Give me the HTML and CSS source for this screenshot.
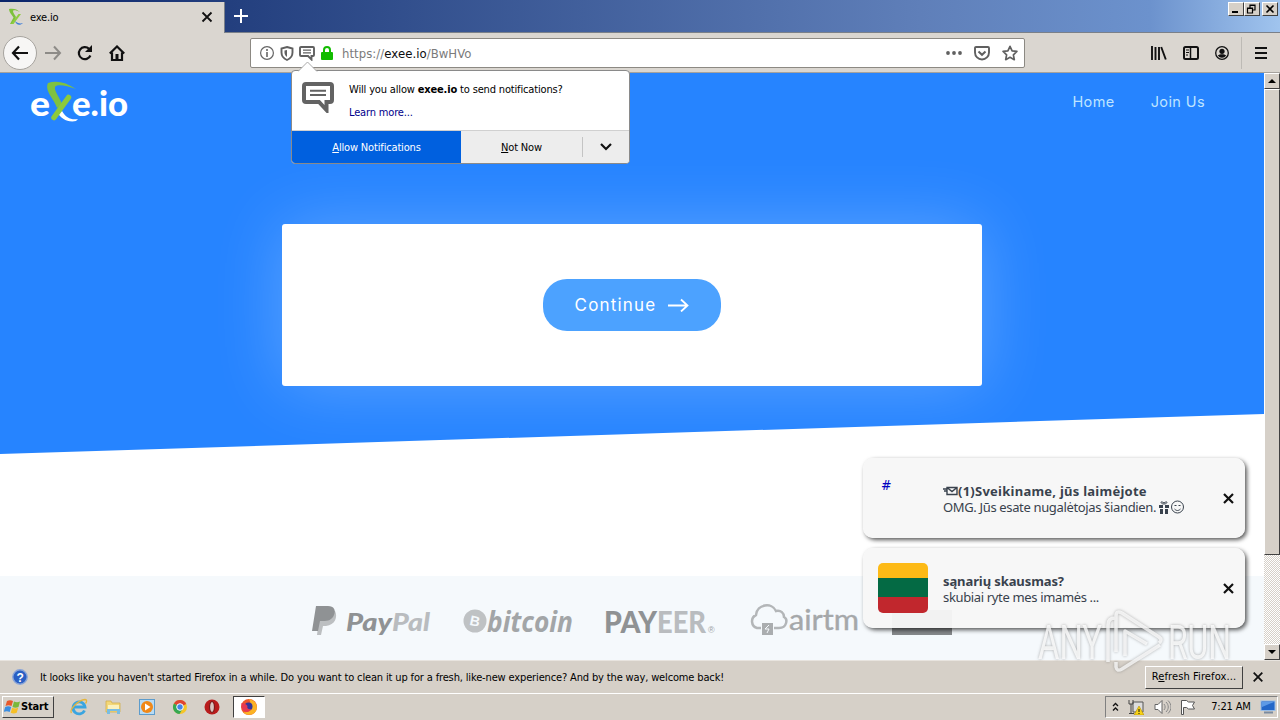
FILE: index.html
```html
<!DOCTYPE html>
<html lang="en">
<head>
<meta charset="UTF-8">
<meta name="viewport" content="width=device-width, initial-scale=1">
<title>exe.io</title>
<link rel="stylesheet" href="styles.css">
</head>
<body>

<div class="tabstrip">
  <div class="tab">
    <svg class="favicon" width="16" height="18" viewBox="0 0 16 18">
      <path d="M1 1c4-1 8 0 11 3-4-2-7-2-7-1 0 2 2 4 3 6L5 16H2L5.500 9.500C3 6 1 4 1 1z" fill="#7dc13c"/>
      <path d="M13 6 5.500 16H3L10.500 6z" fill="#8fcc3f"/>
      <path d="M7 13c2 2 5 3 8 2-3 3-7 2-8-2z" fill="#3f7fd8"/>
    </svg>
    <span class="tab-title">exe.io</span>
    <svg width="12" height="12" viewBox="0 0 12 12"><path d="M1.500 1.500l9 9M10.500 1.500l-9 9" stroke="#111" stroke-width="1.800"/></svg>
  </div>
  <svg class="new-tab" width="14" height="14" viewBox="0 0 14 14"><path d="M7 0v14M0 7h14" stroke="#fff" stroke-width="2"/></svg>
  <div class="win-buttons">
    <span class="win-btn"><svg width="15" height="12"><path d="M3 9h6" stroke="#000" stroke-width="2"/></svg></span>
    <span class="win-btn"><svg width="15" height="12"><path d="M5 5V2h5v5H8M5 2.500h5M2.500 5h5v5h-5zM2 5.500h6" stroke="#000" stroke-width="1.200" fill="none"/></svg></span>
    <span class="win-btn last"><svg width="15" height="12"><path d="M3.500 2.500l7 7M10.500 2.500l-7 7" stroke="#000" stroke-width="1.600"/></svg></span>
  </div>
</div>

<div class="toolbar">
  <div class="nav-buttons">
    <span class="back"><svg width="18" height="16" viewBox="0 0 18 16"><path d="M8 1.500L2 8l6 6.500M2 8h15" stroke="#111" stroke-width="2.200" fill="none"/></svg></span>
    <svg class="forward" width="18" height="16" viewBox="0 0 18 16"><path d="M10 1.500L16 8l-6 6.500M16 8H1" stroke="#8d8b87" stroke-width="2" fill="none"/></svg>
    <svg width="16" height="16" viewBox="0 0 16 16"><path d="M13.400 10.500A6 6 0 1 1 12 3.800" stroke="#111" stroke-width="2.200" fill="none"/><path d="M15 0v7H8z" fill="#111"/></svg>
    <svg width="16" height="16" viewBox="0 0 16 16"><path d="M.8 8.500L8 1.500l7.200 7M3 7.500V15h10V7.500" stroke="#111" stroke-width="2.200" fill="none"/><path d="M6.500 9h3v6h-3z" fill="#111"/></svg>
  </div>
  <div class="urlbar">
    <svg width="14" height="14" viewBox="0 0 14 14"><circle cx="7" cy="7" r="6.400" fill="none" stroke="#666" stroke-width="1.200"/><path d="M7 3v2M7 6v5" stroke="#666" stroke-width="1.600"/></svg>
    <svg width="14" height="15" viewBox="0 0 14 15"><path d="M7 1l5.500 1.500v4C12.500 10 10.500 12.500 7 14 3.500 12.500 1.500 10 1.500 6.500v-4z" fill="none" stroke="#606060" stroke-width="1.900"/><path d="M7 4v7C5.300 9.700 4.500 8.500 4.500 6.500v-2z" fill="#606060"/></svg>
    <svg class="bubble" width="16" height="15" viewBox="0 0 16 15"><path d="M2 1h12a1 1 0 0 1 1 1v7a1 1 0 0 1-1 1h-1.500v3.500L9 10H2a1 1 0 0 1-1-1V2a1 1 0 0 1 1-1z" fill="none" stroke="#606060" stroke-width="1.900"/><path d="M4 4.200h8M4 6.800h8" stroke="#606060" stroke-width="1.200"/></svg>
    <svg class="lock" width="12" height="14" viewBox="0 0 12 14"><path d="M3 7V4a3 3 0 0 1 6 0v3" fill="none" stroke="#12bc00" stroke-width="2"/><rect y="6" width="12" height="8" rx="1" fill="#12bc00"/></svg>
    <span class="url">https://<b>exee.io</b>/BwHVo</span>
    <svg class="dots" width="16" height="4" viewBox="0 0 16 4"><circle cx="2" cy="2" r="1.900"/><circle cx="8" cy="2" r="1.900"/><circle cx="14" cy="2" r="1.900"/></svg>
    <svg width="16" height="15" viewBox="0 0 16 15"><path d="M2 1h12a1 1 0 0 1 1 1v4.500a7 7 0 0 1-14 0V2a1 1 0 0 1 1-1z" fill="none" stroke="#606060" stroke-width="1.900"/><path d="M4.500 5.500L8 8.800l3.500-3.300" fill="none" stroke="#606060" stroke-width="2"/></svg>
    <svg class="star" width="16" height="16" viewBox="0 0 16 16"><path d="M8 1.300l2.100 4.500 4.800.6-3.500 3.400.9 4.900L8 12.300l-4.300 2.400.9-4.900L1.100 6.400l4.800-.6z" fill="none" stroke="#606060" stroke-width="1.700" stroke-linejoin="round"/></svg>
  </div>
  <div class="tools">
    <svg width="16" height="14" viewBox="0 0 16 14"><path d="M1 0v14M4.500 1v13M8 1v13M10.200 1l4.600 12.500" stroke="#111" stroke-width="1.900"/></svg>
    <svg width="16" height="14" viewBox="0 0 16 14"><rect x="1" y="1" width="14" height="12" rx="1.500" fill="none" stroke="#111" stroke-width="2"/><path d="M7.500 1v12" stroke="#111" stroke-width="1.500"/><path d="M3 4h3M3 6.500h3M3 9h2" stroke="#111"/></svg>
    <svg width="14" height="14" viewBox="0 0 14 14"><circle cx="7" cy="7" r="6.300" fill="none" stroke="#111" stroke-width="1.300"/><circle cx="7" cy="5.300" r="2.600" fill="#111"/><path d="M2.800 9.500c2-1.600 6.400-1.600 8.400 0a5 5 0 0 1-8.400 0z" fill="#111"/></svg>
    <span class="sep"></span>
    <svg width="12" height="12" viewBox="0 0 12 12"><path d="M0 1h12M0 6h12M0 11h12" stroke="#111" stroke-width="2"/></svg>
  </div>
</div>

<div class="content">
  <div class="page">
    <div class="hero">
      <div class="site-nav">
        <svg class="logo" width="100" height="44" viewBox="0 0 100 44">
          <path d="M32 31c4 7 9 9 16 8l-2 2c-8 2-16-3-18-8z" fill="#fff"/>
          <g font-family="Lato, sans-serif" font-weight="900" font-size="34" fill="#fff">
            <text x="0" y="36" textLength="20" lengthAdjust="spacingAndGlyphs">e</text>
            <text x="42" y="36" textLength="56" lengthAdjust="spacingAndGlyphs">e.io</text>
          </g>
          <path d="M18 3c8-3 18-1 28 6-10-4-20-5-21-2-1 4 5 11 7 17l-5 4C25 20 14 11 18 3z" fill="#7fc241"/>
          <path d="M38.500 17.500L24 37.500" stroke="#8dca3c" stroke-width="5.500" stroke-linecap="round"/>
        </svg>
        <nav class="links"><a>Home</a><a class="join">Join Us</a></nav>
      </div>
      <div class="card">
        <div class="continue"><span>Continue</span>
          <svg width="21" height="14" viewBox="0 0 21 14"><path d="M0 7.500h19M13 1.500l6.500 6-6.500 6" stroke="#fff" stroke-width="1.800" fill="none"/></svg>
        </div>
      </div>
    </div>
    <div class="payments">
      <svg class="brands" width="660" height="46" viewBox="0 0 660 46">
        <!-- paypal -->
        <path d="M8 11h15c3 6 0 14-9 15h-3l-2 9H5z" fill="#bcbfc1"/>
        <path d="M4 6h12c6 0 8 4 6 9-2 5-6 6-11 6H8l-2 10H0z" fill="#8f9294"/>
        <g font-family="Lato, sans-serif" font-weight="900" font-style="italic" font-size="24">
          <text x="34" y="31" textLength="46" lengthAdjust="spacingAndGlyphs" fill="#8f9294">Pay</text>
          <text x="80" y="31" textLength="38" lengthAdjust="spacingAndGlyphs" fill="#b9bcbf">Pal</text>
        </g>
        <!-- bitcoin -->
        <circle cx="163" cy="21" r="11.500" fill="#bfc2c4"/>
        <text x="158" y="26" font-family="Liberation Sans" font-weight="bold" font-size="14" fill="#f5f9fc" transform="rotate(12 163 21)">B</text>
        <text x="175" y="32" font-family="Open Sans, sans-serif" font-weight="bold" font-style="italic" font-size="28" textLength="86" lengthAdjust="spacingAndGlyphs" fill="#a2a5a7">bitcoin</text>
        <!-- payeer -->
        <g font-family="Lato, sans-serif" font-weight="900" font-size="30">
          <text x="292" y="33" textLength="53" lengthAdjust="spacingAndGlyphs" fill="#8f9294">PAY</text>
          <text x="345" y="33" textLength="49" lengthAdjust="spacingAndGlyphs" fill="#b9bcbf">EER</text>
        </g>
        <text x="396" y="33" font-family="Liberation Sans" font-size="9" fill="#a0a3a5">®</text>
        <!-- airtm -->
        <path d="M449 28h-4a7 7 0 0 1-1-13c1-11 16-13 20-4 5-1 8 2 8 6 4 2 3 11-5 11h-5" fill="none" stroke="#b3b6b8" stroke-width="2.500"/>
        <rect x="450" y="23" width="11" height="12" fill="#aaadaf"/>
        <path d="M457 25l-4 4h4l-2 4" stroke="#f5f9fc" fill="none"/>
        <text x="477" y="30" font-family="Lato, sans-serif" font-size="29" textLength="70" lengthAdjust="spacingAndGlyphs" fill="#a5a8aa" stroke="#a5a8aa" stroke-width=".4">airtm</text>
        <rect x="580" y="10" width="60" height="25" fill="#86898b"/>
      </svg>
    </div>
  </div>
  <div class="scrollbar">
    <span class="sb-btn"><svg width="8" height="4"><path d="M0 4l4-4 4 4z"/></svg></span>
    <span class="sb-thumb"></span>
    <span class="sb-track"></span>
    <span class="sb-btn"><svg width="8" height="4"><path d="M0 0l4 4 4-4z"/></svg></span>
  </div>
</div>

<div class="infobar">
  <svg width="16" height="16" viewBox="0 0 16 16"><circle cx="8" cy="8" r="7.200" fill="#2a5fc4" stroke="#8aa5d8" stroke-width="1.400"/><text x="4.600" y="12.500" font-family="Liberation Sans" font-weight="bold" font-size="12" fill="#fff">?</text></svg>
  <span class="info-text">It looks like you haven't started Firefox in a while. Do you want to clean it up for a fresh, like-new experience? And by the way, welcome back!</span>
  <span class="refresh">R<u>e</u>fresh Firefox...</span>
  <svg width="10" height="10" viewBox="0 0 10 10"><path d="M.7.7l8.600 8.600M9.300.7L.7 9.300" stroke="#111" stroke-width="1.800"/></svg>
</div>

<div class="taskbar">
  <div class="start">
    <svg width="17" height="16" viewBox="0 0 17 16">
      <path d="M3 2c2-1 4-1 6 0L7.500 7c-2-1-4-1-6 0z" fill="#e8582a"/>
      <path d="M10 2.500c2 1 4 1 6 0L14.500 8c-2 1-4 1-6 0z" fill="#7ab83a"/>
      <path d="M1.200 8c2-1 4-1 6 0l-1.500 5c-2-1-4-1-6 0z" fill="#3b8de0"/>
      <path d="M8.200 8.800c2 1 4 1 6 0l-1.500 5c-2 1-4 1-6 0z" fill="#f6bf26"/>
    </svg>
    <span>Start</span>
  </div>
  <div class="apps">
    <svg width="18" height="18" viewBox="0 0 18 18"><path d="M14.500 12.500A6 6 0 1 1 15 9H4" fill="none" stroke="#3aa5e0" stroke-width="2.800"/><path d="M1.500 15C-1 12 8 2 15 1.500c2.500 0 1.500 3 .5 4" fill="none" stroke="#e5b53c" stroke-width="1.300"/></svg>
    <svg width="18" height="18" viewBox="0 0 18 18"><path d="M2 3h5l1 2h8v9H2z" fill="#f3d778" stroke="#d3ae4b" stroke-width=".8"/><path d="M4 7h11v4H4z" fill="#fbf1bd"/><path d="M3 16v-5h13v5h-3v-3H6v3z" fill="#79bde2"/></svg>
    <svg width="18" height="18" viewBox="0 0 18 18"><rect x="1.500" y="1.500" width="15" height="15" fill="#b8dbf4" stroke="#5d9ccc"/><circle cx="9" cy="9" r="6" fill="#f08818"/><path d="M7 5.500l5.500 3.500L7 12.500z" fill="#fff"/></svg>
    <svg width="16" height="16" viewBox="0 0 16 16"><circle cx="8" cy="8" r="7" fill="#f5c528"/><path d="M8 8L1.900 4.500A7 7 0 0 1 14.200 5z" fill="#df4432"/><path d="M8 8L1.900 4.500A7 7 0 0 0 7.500 15l3-5z" fill="#36a852"/><circle cx="8" cy="8" r="3.300" fill="#4385e8" stroke="#fff"/></svg>
    <svg width="16" height="16" viewBox="0 0 16 16"><circle cx="8" cy="8" r="7.500" fill="#b81c1c"/><ellipse cx="8" cy="8" rx="2.400" ry="5.500" fill="#d9c5c0" stroke="#701010"/></svg>
    <span class="app-active"><svg width="18" height="18" viewBox="0 0 18 18"><circle cx="9" cy="9" r="8" fill="#f0562a"/><path d="M9 1c6 1 9 6 7.500 11A8 8 0 0 1 3 14c8 2 10-5 6-13z" fill="#fbb324"/><circle cx="8.500" cy="8.500" r="4" fill="#35359a"/><path d="M1.500 5c2 0 5 1 6 3-1 2 1 4 4 3-3 5-9 3-10-2z" fill="#e63852"/></svg></span>
  </div>
  <div class="tray">
    <svg width="7" height="10" viewBox="0 0 7 10"><path d="M1 4l2.500-2.500L6 4M1 8.500L3.500 6 6 8.500" fill="none" stroke="#111" stroke-width="1.300"/></svg>
    <svg width="16" height="16" viewBox="0 0 16 16"><path d="M5 3h10v10H5z" fill="#ddd" stroke="#555"/><path d="M1 1v4h4V1M3 5v10M1 14.500h5" stroke="#444" fill="none"/><path d="M11 7l5 9H6z" fill="#f8d316" stroke="#b48b00" stroke-width=".6"/><path d="M11 10v3M11 14v1" stroke="#111"/></svg>
    <svg width="17" height="16" viewBox="0 0 17 16"><path d="M1 5.500h3L8 1.500v13l-4-4H1z" fill="#fff" stroke="#666"/><path d="M10 5c1.500 2 1.500 4 0 6M12 3c3 3 3 7 0 10M14 1.500c4 4 4 9 0 13" fill="none" stroke="#888"/></svg>
    <svg width="16" height="16" viewBox="0 0 16 16"><path d="M1.500 15.500V1.500h5l2 1.500h6l-2 3.500 2 3.500h-6l-2-1.500h-3v7z" fill="#fff" stroke="#555"/></svg>
    <span class="clock">7:21 AM</span>
    <svg width="16" height="14" viewBox="0 0 16 14"><rect x="1" y="1" width="14" height="9.500" fill="#2467c8" stroke="#98bde8"/><path d="M2 2h12L2 7z" fill="#5d9ae6"/><path d="M4 12.500h9" stroke="#7a8ba0" stroke-width="2"/></svg>
  </div>
</div>

<div class="doorhanger">
  <svg class="arrow" width="20" height="11" viewBox="0 0 20 11"><path d="M0 10.500L9.500 1 19 10.500" fill="#fff" stroke="#aaa"/><path d="M1 10h17v1H1z" fill="#fff"/></svg>
  <div class="dh-body">
    <svg width="32" height="31" viewBox="0 0 32 31"><path d="M4 2h24a2 2 0 0 1 2 2v14a2 2 0 0 1-2 2h-3.500v8L17 20H4a2 2 0 0 1-2-2V4a2 2 0 0 1 2-2z" fill="none" stroke="#636363" stroke-width="4"/><path d="M8 8.700h16M8 13h16" stroke="#636363" stroke-width="2"/></svg>
    <div class="dh-text">
      <div class="question">Will you allow <b>exee.io</b> to send notifications?</div>
      <div class="learn">Learn more...</div>
    </div>
  </div>
  <div class="dh-actions">
    <span class="allow"><span><u>A</u>llow Notifications</span></span>
    <span class="notnow"><span><u>N</u>ot Now</span></span>
    <span class="more"><svg width="12" height="8" viewBox="0 0 12 8"><path d="M1 1l5 5 5-5" stroke="#111" stroke-width="2.200" fill="none"/></svg></span>
  </div>
</div>

<div class="toasts">
  <div class="toast">
    <span class="thumb hash">#</span>
    <div class="toast-text">
      <div class="toast-title"><svg width="15" height="10" viewBox="0 0 15 10"><path d="M4 1.500h10v7H4zM4 1.500l5 4 5-4M0 3h4M1 5h3" fill="none" stroke="#39424d" stroke-width="1.400"/></svg><span class="t1">(1)Sveikiname, jūs laimėjote</span></div>
      <div class="toast-msg"><span class="m1">OMG. Jūs esate nugalėtojas šiandien.</span><svg width="28" height="14" viewBox="0 0 28 14"><path d="M3 5h4v3H3zM9 5h4v3H9zM4 9h3v5H4zM9 9h3v5H9z" fill="#39424d"/><path d="M8 4C4 4 4 0 8 3c4-3 4 1 0 1z" fill="none" stroke="#39424d"/><circle cx="21.500" cy="7" r="6" fill="none" stroke="#39424d"/><path d="M18.500 5.500h2M22.500 5.500h2M18.500 9c2 2 4 2 6 0" fill="none" stroke="#39424d"/></svg></div>
    </div>
    <svg width="11" height="11" viewBox="0 0 11 11"><path d="M1 1l9 9M10 1l-9 9" stroke="#111" stroke-width="2.200"/></svg>
  </div>
  <div class="toast">
    <span class="thumb flag"></span>
    <div class="toast-text">
      <div class="toast-title"><span class="t2">sąnarių skausmas?</span></div>
      <div class="toast-msg"><span class="m2">skubiai ryte mes imamės ...</span></div>
    </div>
    <svg width="11" height="11" viewBox="0 0 11 11"><path d="M1 1l9 9M10 1l-9 9" stroke="#111" stroke-width="2.200"/></svg>
  </div>
</div>

<svg class="watermark" width="220" height="76" viewBox="0 0 220 76">
  <g font-family="Roboto, sans-serif" font-size="48" fill="#fff" fill-opacity=".8">
    <text x="2" y="51" textLength="64" lengthAdjust="spacingAndGlyphs">ANY</text>
    <text x="132" y="51" textLength="63" lengthAdjust="spacingAndGlyphs">RUN</text>
  </g>
  <path d="M72 54V17q0-7 7-7M80 44V8q0-6 6-3l37 24q4 3 0 6M89 48V23l22 13M80 54v5q1 5 6 2l38-24" fill="none" stroke="#fff" stroke-opacity=".75" stroke-width="3.500" stroke-linejoin="round"/>
</svg>

</body>
</html>
```

FILE: styles.css
```css
* {
  box-sizing: border-box;
}
body {
  margin: 0;
  width: 1280px;
  height: 720px;
  overflow: hidden;
  position: relative;
  display: flex;
  flex-direction: column;
  background: #d6d0c8;
  color: #000;
  font-family: 'DejaVu Sans Condensed', 'DejaVu Sans', sans-serif;
  font-size: 11px;
  letter-spacing: -0.16px;
  white-space: nowrap;
}
svg {
  display: block;
  flex: none;
  letter-spacing: 0;
}

/* Tabs and window buttons */
.tabstrip {
  height: 33px;
  flex: none;
  display: flex;
  align-items: flex-start;
  background: linear-gradient(90deg, #0a246a 0, #24407f 240px, #5f7fb9 920px, #6c92cd 1150px, #a0c4ee 1280px);
  border-bottom: 1px solid #7a8089;
}
.tab {
  width: 225px;
  height: 31px;
  margin: 2px 0 -1px;
  padding: 0 11px 1px 8px;
  display: flex;
  align-items: center;
  background: #dad6d0;
  border-right: 1px solid #7a8089;
}
.tab-title {
  flex: 1;
  margin-left: 6px;
}
.new-tab {
  margin: 9px 0 0 9px;
}
.win-buttons {
  margin: 2px 2px 0 auto;
  display: flex;
}
.win-btn {
  width: 16px;
  height: 14px;
  background: #d6d0c8;
  border: 1px solid;
  border-color: #fff #404040 #404040 #fff;
}
.win-btn.last {
  margin-left: 2px;
}

/* Toolbar */
.toolbar {
  height: 40px;
  flex: none;
  padding-top: 1px;
  display: flex;
  align-items: center;
  background: #dad6d0;
  border-bottom: 1px solid #a5a29d;
}
.nav-buttons {
  width: 250px;
  padding-left: 3px;
  display: flex;
  align-items: center;
  gap: 16px;
}
.back {
  width: 34px;
  height: 34px;
  margin-right: -9px;
  border-radius: 50%;
  border: 1px solid #a6a39e;
  background: #f7f6f5;
  display: flex;
  align-items: center;
  justify-content: center;
}
.forward {
  margin-right: -1px;
}
.urlbar {
  width: 775px;
  height: 30px;
  padding: 0 6px 0 9px;
  display: flex;
  align-items: center;
  gap: 6px;
  background: #fff;
  border: 1px solid #8c8983;
  border-radius: 2px;
}
.bubble {
  margin-left: -1px;
}
.lock {
  margin-right: 3px;
}
.url {
  flex: 1;
  font-size: 13px;
  letter-spacing: 0.05px;
  color: #7b7b7b;
}
.url b {
  font-weight: normal;
  color: #0c0c0d;
}
.dots {
  margin-right: 6px;
  fill: #606060;
}
.star {
  margin-left: 6px;
}
.tools {
  margin-left: auto;
  padding-right: 13px;
  display: flex;
  align-items: center;
  gap: 16px;
}
.tools .sep {
  width: 1px;
  height: 32px;
  margin: 0 -3px 0 -4px;
  background: #bdbab5;
}

/* Web page */
.content {
  height: 587px;
  flex: none;
  display: flex;
}
.page {
  width: 1264px;
  display: flex;
  flex-direction: column;
  justify-content: space-between;
  background: #fff;
}
.hero {
  height: 381px;
  overflow: hidden;
  background: #2684ff;
  clip-path: polygon(0 0, 100% 0, 100% 341px, 0 381px);
}
.site-nav {
  height: 151px;
  padding: 7px 59px 0 30px;
  display: flex;
  justify-content: space-between;
}
.links {
  padding-top: 13px;
  font-family: Inter, sans-serif;
  font-size: 14.5px;
  line-height: 18px;
  letter-spacing: 0.4px;
  color: #bfe4ff;
}
.join {
  margin-left: 36px;
}
.card {
  width: 700px;
  height: 162px;
  margin: 0 auto;
  display: flex;
  align-items: center;
  justify-content: center;
  background: #fff;
  border-radius: 3px;
  box-shadow: 0 0 70px rgba(255, 255, 255, 0.25);
}
.continue {
  width: 178px;
  height: 52px;
  display: flex;
  align-items: center;
  justify-content: center;
  gap: 12px;
  border-radius: 24px;
  background: #4ca2ff;
  color: #fff;
  font-family: Inter, sans-serif;
  font-size: 17px;
  letter-spacing: 1.2px;
}
.payments {
  height: 84px;
  padding: 24px 0 0 312px;
  background: #f5f9fc;
}

/* Scrollbar */
.scrollbar {
  width: 16px;
  display: flex;
  flex-direction: column;
  background: #ebe8e4;
}
.sb-btn {
  height: 16px;
  display: flex;
  align-items: center;
  justify-content: center;
}
.sb-btn,
.sb-thumb {
  background: #d6d0c8;
  border: 1px solid;
  border-color: #fff #404040 #404040 #fff;
}
.sb-thumb {
  height: 466px;
}
.sb-track {
  flex: 1;
  background: repeating-conic-gradient(#fff 0 25%, #d6d0c8 0 50%) 0 0 / 2px 2px;
}

/* Info bar above the taskbar */
.infobar {
  height: 33px;
  flex: none;
  padding: 0 17px 0 12px;
  display: flex;
  align-items: center;
  border-top: 1px solid #e8e4df;
}
.info-text {
  flex: 1;
  margin-left: 12px;
  letter-spacing: -0.145px;
}
.refresh {
  width: 98px;
  height: 23px;
  margin-right: 10px;
  line-height: 20px;
  text-align: center;
  letter-spacing: 0.1px;
  border: 1px solid;
  border-color: #fff #404040 #404040 #fff;
}

/* Taskbar */
.taskbar {
  height: 27px;
  flex: none;
  padding: 0 2px 1px;
  display: flex;
  align-items: center;
  border-top: 1px solid #fff;
}
.start {
  width: 52px;
  height: 22px;
  padding-left: 1px;
  display: flex;
  align-items: center;
  border: 1px solid;
  border-color: #fff #404040 #404040 #fff;
  font-weight: bold;
}
.apps {
  margin-left: 16px;
  display: flex;
  align-items: center;
  gap: 16px;
}
.app-active {
  width: 32px;
  height: 22px;
  margin-left: -3px;
  display: flex;
  align-items: center;
  justify-content: center;
  background: #fff;
  border: 1px solid;
  border-color: #404040 #fff #fff #404040;
}
.tray {
  width: 173px;
  height: 22px;
  margin-left: auto;
  padding: 0 1px 0 6px;
  display: flex;
  align-items: center;
  justify-content: space-between;
  border: 1px solid;
  border-color: #808080 #fff #fff #808080;
}
.clock {
  margin-left: 6px;
}

/* Permission popup */
.doorhanger {
  position: absolute;
  left: 291px;
  top: 70px;
  width: 339px;
  height: 94px;
  background: #fff;
  border: 1px solid #8a8a8a;
  border-radius: 4px;
}
.arrow {
  position: absolute;
  left: 6px;
  top: -10px;
}
.dh-body {
  height: 60px;
  padding: 11px 0 0 10px;
  display: flex;
  border-bottom: 1px solid #d0d0d0;
}
.dh-text {
  margin: 1px 0 0 15px;
}
.question,
.learn {
  line-height: 14px;
}
.learn {
  margin-top: 9px;
  color: #00008b;
}
.dh-actions {
  height: 32px;
  display: flex;
  background: #ededed;
  border-radius: 0 0 3px 3px;
}
.dh-actions > span {
  display: flex;
  align-items: center;
  justify-content: center;
}
.dh-actions .allow {
  width: 169px;
  background: #0060df;
  color: #fff;
  border-radius: 0 0 0 3px;
}
.dh-actions .notnow {
  width: 121px;
}
.dh-actions .more {
  width: 47px;
  height: 20px;
  margin-top: 6px;
  border-left: 1px solid #c4c4c4;
}

/* Push messages */
.toasts {
  position: absolute;
  left: 863px;
  top: 458px;
  width: 382px;
  display: flex;
  flex-direction: column;
  gap: 10px;
  font-family: 'Noto Sans', sans-serif;
  font-size: 13px;
}
.toast {
  height: 80px;
  padding: 0 11px 0 15px;
  display: flex;
  align-items: center;
  background: rgba(247, 247, 247, 0.96);
  border-radius: 10px;
  box-shadow: 2px 2px 4px rgba(0, 0, 0, 0.65);
}
.thumb {
  width: 50px;
  height: 50px;
  border-radius: 5px;
}
.hash {
  padding: 4px 0 0 3px;
  color: #0000c0;
  font-family: 'DejaVu Sans Condensed', sans-serif;
  font-size: 14px;
}
.flag {
  background: linear-gradient(#fdba16 0 15px, #046a44 15px 34px, #c1272d 34px);
}
.toast-text {
  flex: 1;
  margin: 2px 0 0 15px;
  color: #39424d;
}
.toast-title,
.toast-msg {
  height: 16px;
  line-height: 16px;
  display: flex;
  align-items: center;
}
.toast-title {
  font-weight: bold;
}
.t1 {
  letter-spacing: 0.25px;
}
.t2 {
  letter-spacing: -0.1px;
}
.m1,
.m2 {
  letter-spacing: -0.35px;
}

.watermark {
  position: absolute;
  left: 1036px;
  top: 608px;
  filter: drop-shadow(0 0 1.5px rgba(90, 90, 90, 0.6));
}
```
